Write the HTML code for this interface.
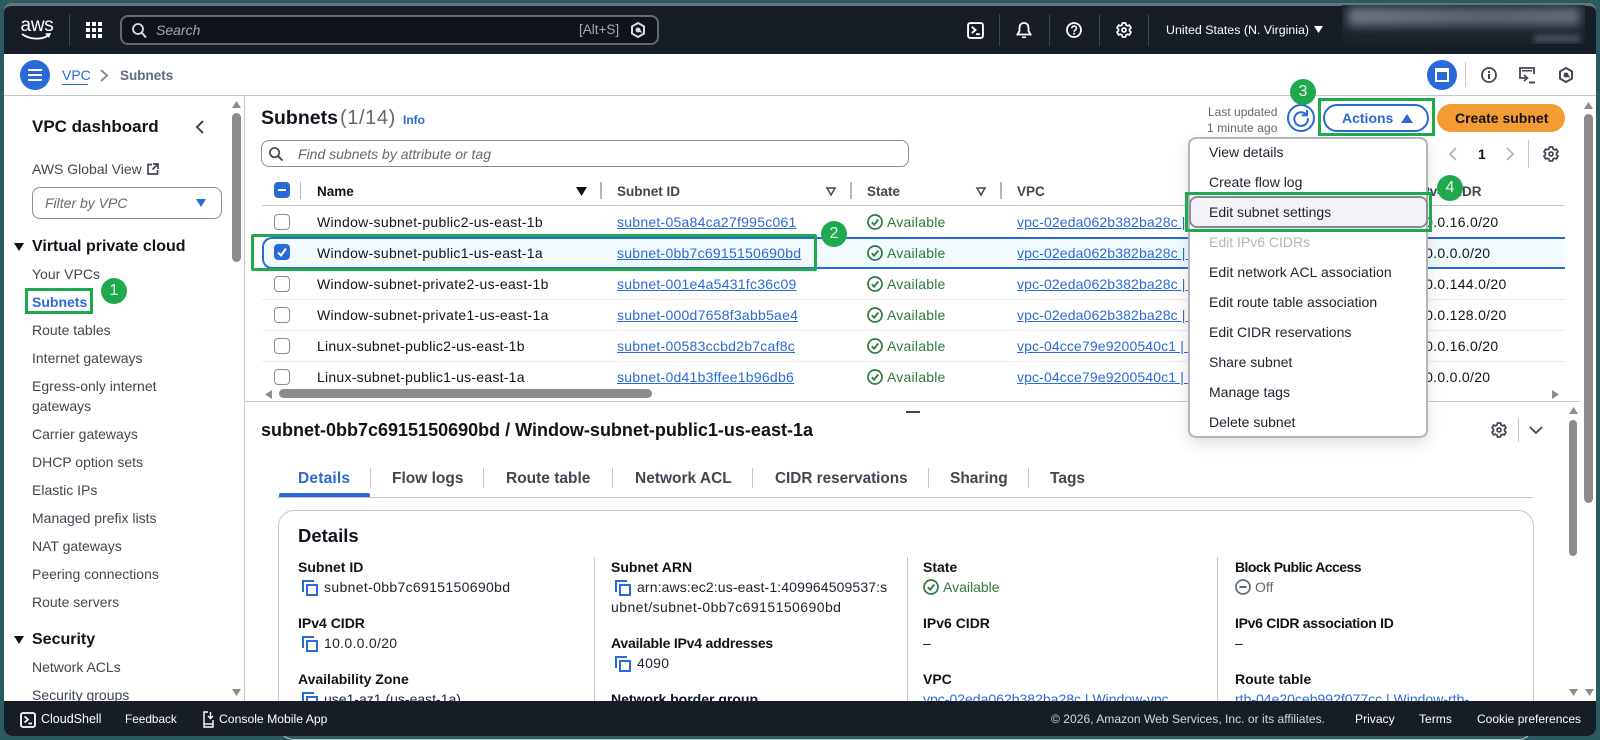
<!DOCTYPE html>
<html><head><meta charset="utf-8"><title>Subnets</title>
<style>
*{box-sizing:border-box}
html,body{margin:0;padding:0;width:1600px;height:740px;overflow:hidden;background:#2b5a60;font-family:"Liberation Sans",sans-serif;color:#0f141a}
#win{position:absolute;left:4px;top:3px;width:1592px;height:733px;background:#fff;border-radius:8px;overflow:hidden}
.a{position:absolute}
.t{position:absolute;white-space:nowrap;line-height:20px;font-size:14px}
.b{font-weight:700}
.l{color:#2a6ad8;text-decoration:underline}
.n{color:#424650;left:32px}
.g{color:#2b7a3c}
.h{font-weight:700;color:#424650}
.r{letter-spacing:.3px}
.i{letter-spacing:.25px}
.v{letter-spacing:.13px}
.c{letter-spacing:.3px}
.av{letter-spacing:.22px}
.sq{position:absolute;width:16px;height:16px;left:274px;border:1.5px solid #8c8c94;border-radius:4px;background:#fff}
.dv{position:absolute;width:1px;background:#c6c6cd}
.bar{position:absolute;width:2px;background:#b4b4bb}
.st{position:absolute;width:26px;height:26px;border-radius:50%;background:#1fa94f;color:#e8f5ec;font-size:16px;line-height:26px;text-align:center;z-index:30}
.gb{position:absolute;border:3px solid #1fa94f;z-index:29}
.ln{position:absolute;height:1px;background:#e9ebed}
.m{font-size:14px;color:#1b232d;left:1209px}
.f{color:#fff;font-size:12.100px}
svg{position:absolute;overflow:visible}
</style></head><body>
<svg width="0" height="0" style="position:absolute"><defs>
<symbol id="gear" viewBox="0 0 16 16"><path d="M6.400 1h3.200l.4 2 1.500.8 1.900-.7 1.600 2.800-1.500 1.300v1.600l1.500 1.300-1.600 2.800-1.900-.7-1.500.8-.4 2H6.400l-.4-2-1.500-.8-1.900.7L1 10.100l1.500-1.300V7.200L1 5.900l1.600-2.800 1.900.7 1.500-.8z" fill="none" stroke="currentColor" stroke-width="1.700" stroke-linejoin="round"/><circle cx="8" cy="8" r="2" fill="none" stroke="currentColor" stroke-width="1.700"/></symbol>
<symbol id="ok" viewBox="0 0 16 16"><circle cx="8" cy="8" r="7" fill="none" stroke="currentColor" stroke-width="1.700"/><path d="M4.800 8.200l2.300 2.500 4.200-5.200" fill="none" stroke="currentColor" stroke-width="1.800"/></symbol>
<symbol id="cp" viewBox="0 0 16 16"><path d="M1 12V1h11" fill="none" stroke="#2a6ad8" stroke-width="2"/><rect x="5" y="5" width="10" height="10" fill="none" stroke="#2a6ad8" stroke-width="2"/></symbol>
<symbol id="hx" viewBox="0 0 16 16"><path d="M8 1l6 3.400v7.200L8 15l-6-3.400V4.400z" fill="none" stroke="currentColor" stroke-width="2"/><path d="M5.500 8a2.500 2.500 0 0 1 5 0l2 3-3-1a2.500 2.500 0 0 1-4-2z" fill="currentColor"/></symbol>
<symbol id="term" viewBox="0 0 16 16"><rect x="1" y="1" width="14" height="14" rx="2" fill="none" stroke="currentColor" stroke-width="1.800"/><path d="M4.500 4.500L8 7.500l-3.500 3M8.500 11.500H12" fill="none" stroke="currentColor" stroke-width="1.800"/></symbol>
</defs></svg>

<div id="win"></div>

<!-- top nav -->
<div class="a" style="left:4px;top:3px;width:1592px;height:51px;background:#161d26;border-top:3px solid #69737d;border-radius:8px 8px 0 0"></div>
<div class="t" style="left:20px;top:15px;color:#fff;font-size:19px;line-height:22px;letter-spacing:-.3px;width:34px;text-align:center">aws</div>
<svg style="left:21px;top:33px" width="31" height="8" viewBox="0 0 31 8"><path d="M1 1c8 6 20 6 27 1" fill="none" stroke="#fff" stroke-width="1.800"/><path d="M24 .5l6-.5-2 5" fill="#fff"/></svg>
<div class="a" style="left:69px;top:14px;width:1px;height:32px;background:#424650"></div>
<svg style="left:86px;top:22px" width="16" height="16" viewBox="0 0 16 16" fill="#fff"><rect width="4" height="4"/><rect x="6" width="4" height="4"/><rect x="12" width="4" height="4"/><rect y="6" width="4" height="4"/><rect x="6" y="6" width="4" height="4"/><rect x="12" y="6" width="4" height="4"/><rect y="12" width="4" height="4"/><rect x="6" y="12" width="4" height="4"/><rect x="12" y="12" width="4" height="4"/></svg>
<div class="a" style="left:120px;top:15px;width:539px;height:30px;background:#0f141a;border:2px solid #656871;border-radius:8px"></div>
<svg style="left:132px;top:23px" width="15" height="15" viewBox="0 0 15 15"><circle cx="6" cy="6" r="5" fill="none" stroke="#d8dce0" stroke-width="1.800"/><path d="M10 10l4 4.500" stroke="#d8dce0" stroke-width="2"/></svg>
<div class="t" style="left:156px;top:20px;color:#a4abb4;font-style:italic">Search</div>
<div class="t" style="left:579px;top:20px;color:#a4abb4;font-size:13.500px">[Alt+S]</div>
<svg style="left:630px;top:22px;color:#d8dce0" width="16" height="16"><use href="#hx"/></svg>
<svg style="left:967px;top:22px;color:#fff" width="17" height="17"><use href="#term"/></svg>
<div class="a" style="left:999px;top:14px;width:1px;height:32px;background:#424650"></div>
<svg style="left:1016px;top:22px" width="16" height="17" viewBox="0 0 16 17"><path d="M8 1c-3 0-4.500 2-4.500 5v3L1.500 12.500h13L12.500 9V6C12.500 3 11 1 8 1z" fill="none" stroke="#fff" stroke-width="1.800"/><path d="M6 14.500h4v1.500H6z" fill="#fff"/></svg>
<div class="a" style="left:1049px;top:14px;width:1px;height:32px;background:#424650"></div>
<svg style="left:1066px;top:22px" width="16" height="16" viewBox="0 0 16 16"><circle cx="8" cy="8" r="7" fill="none" stroke="#fff" stroke-width="1.800"/><path d="M5.800 6.300c0-3 4.600-3 4.600 0 0 1.800-2.300 1.700-2.300 3.400" fill="none" stroke="#fff" stroke-width="1.600"/><rect x="7.200" y="10.800" width="1.800" height="1.800" fill="#fff"/></svg>
<div class="a" style="left:1099px;top:14px;width:1px;height:32px;background:#424650"></div>
<svg style="left:1116px;top:22px;color:#fff" width="16" height="16"><use href="#gear"/></svg>
<div class="a" style="left:1148px;top:14px;width:1px;height:32px;background:#424650"></div>
<div class="t" style="left:1166px;top:20px;color:#fff;font-size:12.400px">United States (N. Virginia)</div>
<svg style="left:1314px;top:26px" width="9" height="7"><path d="M0 0h9L4.500 7z" fill="#fff"/></svg>
<div class="a" style="left:1342px;top:5px;width:243px;height:39px;overflow:hidden;background:#1b222c"><div class="a" style="left:6px;top:2px;width:232px;height:19px;background:linear-gradient(90deg,#6c7886,#5a6572 60%,#626e7b);filter:blur(5px)"></div><div class="a" style="left:192px;top:30px;width:46px;height:7px;background:#4a525d;filter:blur(3px)"></div></div>

<!-- breadcrumb -->
<div class="a" style="left:4px;top:94.500px;width:1592px;height:1px;background:#c6c6cd"></div>
<div class="a" style="left:20px;top:60px;width:30px;height:30px;border-radius:50%;background:#2a6ad8"></div>
<svg style="left:28px;top:69px" width="14" height="12" fill="#fff"><rect width="14" height="2"/><rect y="5" width="14" height="2"/><rect y="10" width="14" height="2"/></svg>
<div class="t" style="left:62px;top:65px;color:#2a6ad8">VPC</div>
<div class="a" style="left:62px;top:84px;width:26px;height:1px;background:#2a6ad8"></div>
<svg style="left:100px;top:69px" width="9" height="13"><path d="M1 1l6 5.500L1 12" fill="none" stroke="#8c8c94" stroke-width="2"/></svg>
<div class="t b" style="left:120px;top:66px;color:#5f6b7a;font-size:13.500px">Subnets</div>
<div class="a" style="left:1427px;top:60px;width:30px;height:30px;border-radius:50%;background:#2a6ad8"></div>
<div class="a" style="left:1435px;top:68px;width:14px;height:14px;border:2px solid #fff;border-top-width:4px"></div>
<div class="a" style="left:1465px;top:62px;width:1px;height:25px;background:#c6c6cd"></div>
<svg style="left:1481px;top:67px" width="16" height="16" viewBox="0 0 16 16"><circle cx="8" cy="8" r="7" fill="none" stroke="#424650" stroke-width="1.800"/><rect x="7" y="7" width="2" height="5" fill="#424650"/><rect x="7" y="4" width="2" height="2" fill="#424650"/></svg>
<svg style="left:1519px;top:67px" width="16" height="17" viewBox="0 0 16 17"><path d="M7 11H1V1h14v6" fill="none" stroke="#424650" stroke-width="1.800"/><rect x="3" y="3" width="10" height="1.500" fill="#424650"/><path d="M5 8l3.500 3L5 14" fill="none" stroke="#424650" stroke-width="1.700"/><rect x="10" y="14.500" width="6" height="2" fill="#424650"/></svg>
<svg style="left:1558px;top:67px;color:#424650" width="16" height="16"><use href="#hx"/></svg>

<!-- sidebar -->
<div class="a" style="left:244px;top:95px;width:1px;height:606px;background:#c6c6cd"></div>
<div class="a" style="left:232px;top:113px;width:9px;height:149px;border-radius:5px;background:#8c8c8c"></div>
<svg style="left:232px;top:101px" width="9" height="7"><path d="M4.500 0L9 7H0z" fill="#8c8c8c"/></svg>
<svg style="left:232px;top:689px" width="9" height="7"><path d="M0 0h9L4.500 7z" fill="#8c8c8c"/></svg>
<div class="t b" style="left:32px;top:116px;font-size:17px;line-height:22px">VPC dashboard</div>
<svg style="left:195px;top:120px" width="9" height="14"><path d="M8 1L2 7l6 6" fill="none" stroke="#424650" stroke-width="2"/></svg>
<div class="t n" style="top:159px">AWS Global View</div>
<svg style="left:147px;top:163px" width="12" height="12" viewBox="0 0 12 12"><path d="M5 1.500H1v9.500h9.500V7M6 1h5v5M11 1L5.500 6.500" fill="none" stroke="#424650" stroke-width="1.700"/></svg>
<div class="a" style="left:32px;top:187px;width:190px;height:32px;border:1px solid #8c8c94;border-radius:8px"></div>
<div class="t" style="left:45px;top:193px;color:#656871;font-style:italic">Filter by VPC</div>
<svg style="left:196px;top:199px" width="10" height="8"><path d="M0 0h10L5 8z" fill="#2a6ad8"/></svg>
<svg style="left:14px;top:243px" width="10" height="8"><path d="M0 0h10L5 8z" fill="#0f141a"/></svg>
<div class="t b" style="left:32px;top:236.500px;font-size:16px">Virtual private cloud</div>
<div class="t n" style="top:264px">Your VPCs</div>
<div class="t b" style="left:32px;top:292px;color:#2a6ad8">Subnets</div>
<div class="t n" style="top:320px">Route tables</div>
<div class="t n" style="top:348px">Internet gateways</div>
<div class="t n" style="top:376px">Egress-only internet</div>
<div class="t n" style="top:396px">gateways</div>
<div class="t n" style="top:424px">Carrier gateways</div>
<div class="t n" style="top:452px">DHCP option sets</div>
<div class="t n" style="top:480px">Elastic IPs</div>
<div class="t n" style="top:508px">Managed prefix lists</div>
<div class="t n" style="top:536px">NAT gateways</div>
<div class="t n" style="top:564px">Peering connections</div>
<div class="t n" style="top:592px">Route servers</div>
<svg style="left:14px;top:636px" width="10" height="8"><path d="M0 0h10L5 8z" fill="#0f141a"/></svg>
<div class="t b" style="left:32px;top:629.500px;font-size:16px">Security</div>
<div class="t n" style="top:657px">Network ACLs</div>
<div class="t n" style="top:685px">Security groups</div>

<!-- main header -->
<div class="t b" style="left:261px;top:106px;font-size:19.500px;line-height:24px">Subnets</div>
<div class="t" style="left:340px;top:106px;font-size:20px;line-height:24px;color:#656871;letter-spacing:.6px">(1/14)</div>
<div class="t b" style="left:403px;top:110px;font-size:12px;color:#2a6ad8">Info</div>
<div class="t" style="left:1208px;top:102px;font-size:12px;color:#656871">Last updated</div>
<div class="t" style="left:1207px;top:118px;font-size:12px;color:#656871;letter-spacing:.1px">1 minute ago</div>
<div class="a" style="left:1287px;top:104px;width:28px;height:28px;border-radius:50%;border:2px solid #2a6ad8"></div>
<svg style="left:1293px;top:110px" width="16" height="16" viewBox="0 0 16 16"><path d="M12.800 4.200A6.800 6.800 0 1 0 14.800 8" fill="none" stroke="#2a6ad8" stroke-width="2"/><path d="M14 0v5.200H8.800" fill="none" stroke="#2a6ad8" stroke-width="2"/></svg>
<div class="a" style="left:1323px;top:104px;width:106px;height:28px;border-radius:14px;border:2px solid #2a6ad8;background:#fff"></div>
<div class="t b" style="left:1342px;top:108px;color:#2a6ad8">Actions</div>
<svg style="left:1401px;top:114px" width="12" height="9"><path d="M6 0l6 9H0z" fill="#2a6ad8"/></svg>
<div class="a" style="left:1437px;top:104px;width:128px;height:28px;border-radius:14px;background:#f39c33"></div>
<div class="t b" style="left:1455px;top:108px">Create subnet</div>
<div class="a" style="left:261px;top:140px;width:648px;height:27px;border:1px solid #8c8c94;border-radius:8px;background:#fff"></div>
<svg style="left:269px;top:147px" width="14" height="14" viewBox="0 0 15 15"><circle cx="6" cy="6" r="5" fill="none" stroke="#424650" stroke-width="1.800"/><path d="M10 10l4.500 4.500" stroke="#424650" stroke-width="2"/></svg>
<div class="t" style="left:298px;top:144px;color:#656871;font-style:italic">Find subnets by attribute or tag</div>
<svg style="left:1449px;top:147px" width="8" height="14"><path d="M7 1L1 7l6 6" fill="none" stroke="#b4b4bb" stroke-width="1.800"/></svg>
<div class="t b" style="left:1478px;top:144px">1</div>
<svg style="left:1506px;top:147px" width="8" height="14"><path d="M1 1l6 6-6 6" fill="none" stroke="#b4b4bb" stroke-width="1.800"/></svg>
<div class="a" style="left:1528px;top:140px;width:1px;height:28px;background:#c6c6cd"></div>
<svg style="left:1543px;top:146px;color:#424650" width="16" height="16"><use href="#gear"/></svg>

<!-- table header -->
<div class="a" style="left:274px;top:182px;width:16px;height:16px;background:#2a6ad8;border-radius:4px"></div>
<div class="a" style="left:278px;top:189px;width:8px;height:2px;background:#fff"></div>
<div class="bar" style="left:300px;top:182px;height:17px;width:1px"></div>
<div class="t b" style="left:317px;top:181.500px;color:#0f141a;font-size:13.500px">Name</div>
<svg style="left:576px;top:187px" width="11" height="9"><path d="M0 0h11L5.500 9z" fill="#0f141a"/></svg>
<div class="bar" style="left:600px;top:182px;height:17px"></div>
<div class="t h" style="left:617px;top:181.500px;font-size:13.500px">Subnet ID</div>
<svg style="left:826px;top:187px" width="10" height="9"><path d="M1 1h8L5 8z" fill="none" stroke="#424650" stroke-width="1.500"/></svg>
<div class="bar" style="left:850px;top:182px;height:17px"></div>
<div class="t h" style="left:867px;top:181.500px;font-size:13.500px">State</div>
<svg style="left:976px;top:187px" width="10" height="9"><path d="M1 1h8L5 8z" fill="none" stroke="#424650" stroke-width="1.500"/></svg>
<div class="bar" style="left:1000px;top:182px;height:17px"></div>
<div class="t h" style="left:1017px;top:181.500px;font-size:13.500px">VPC</div>
<div class="t h" style="left:1417px;top:181.500px;font-size:13.500px">IPv4 CIDR</div>
<div class="a" style="left:262px;top:205px;width:1303px;height:1px;background:#c6c6cd"></div>

<!-- rows -->
<div class="a" style="left:262px;top:236.500px;width:1303px;height:32px;background:#f1fbff;border:2px solid #2a6ad8;border-right:0;border-radius:10px 0 0 10px"></div>
<div class="ln" style="left:262px;top:299px;width:1303px"></div>
<div class="ln" style="left:262px;top:330px;width:1303px"></div>
<div class="ln" style="left:262px;top:361px;width:1303px"></div>

<div class="sq" style="top:214px"></div>
<div class="a" style="left:274px;top:244px;width:16px;height:16px;background:#2a6ad8;border-radius:4px"></div>
<svg style="left:277px;top:247px" width="10" height="10" viewBox="0 0 10 10"><path d="M1 5.500l3 3L9 1.500" fill="none" stroke="#fff" stroke-width="2"/></svg>
<div class="sq" style="top:276px"></div>
<div class="sq" style="top:307px"></div>
<div class="sq" style="top:338px"></div>
<div class="sq" style="top:369px"></div>

<div class="t r" style="left:317px;top:212px">Window-subnet-public2-us-east-1b</div>
<div class="t r" style="left:317px;top:243px">Window-subnet-public1-us-east-1a</div>
<div class="t r" style="left:317px;top:274px">Window-subnet-private2-us-east-1b</div>
<div class="t r" style="left:317px;top:305px">Window-subnet-private1-us-east-1a</div>
<div class="t i" style="left:317px;top:336px">Linux-subnet-public2-us-east-1b</div>
<div class="t i" style="left:317px;top:367px">Linux-subnet-public1-us-east-1a</div>

<div class="t l i" style="left:617px;top:212px">subnet-05a84ca27f995c061</div>
<div class="t l i" style="left:617px;top:243px">subnet-0bb7c6915150690bd</div>
<div class="t l i" style="left:617px;top:274px">subnet-001e4a5431fc36c09</div>
<div class="t l i" style="left:617px;top:305px">subnet-000d7658f3abb5ae4</div>
<div class="t l i" style="left:617px;top:336px">subnet-00583ccbd2b7caf8c</div>
<div class="t l i" style="left:617px;top:367px">subnet-0d41b3ffee1b96db6</div>

<svg class="g" style="left:867px;top:214px" width="16" height="16"><use href="#ok"/></svg><div class="t g av" style="left:887px;top:212px">Available</div>
<svg class="g" style="left:867px;top:245px" width="16" height="16"><use href="#ok"/></svg><div class="t g av" style="left:887px;top:243px">Available</div>
<svg class="g" style="left:867px;top:276px" width="16" height="16"><use href="#ok"/></svg><div class="t g av" style="left:887px;top:274px">Available</div>
<svg class="g" style="left:867px;top:307px" width="16" height="16"><use href="#ok"/></svg><div class="t g av" style="left:887px;top:305px">Available</div>
<svg class="g" style="left:867px;top:338px" width="16" height="16"><use href="#ok"/></svg><div class="t g av" style="left:887px;top:336px">Available</div>
<svg class="g" style="left:867px;top:369px" width="16" height="16"><use href="#ok"/></svg><div class="t g av" style="left:887px;top:367px">Available</div>

<div class="t l v" style="left:1017px;top:212px">vpc-02eda062b382ba28c | Window</div>
<div class="t l v" style="left:1017px;top:243px">vpc-02eda062b382ba28c | Window</div>
<div class="t l v" style="left:1017px;top:274px">vpc-02eda062b382ba28c | Window</div>
<div class="t l v" style="left:1017px;top:305px">vpc-02eda062b382ba28c | Window</div>
<div class="t l v" style="left:1017px;top:336px">vpc-04cce79e9200540c1 | Linux</div>
<div class="t l v" style="left:1017px;top:367px">vpc-04cce79e9200540c1 | Linux</div>

<div class="t c" style="left:1417px;top:212px">10.0.16.0/20</div>
<div class="t c" style="left:1417px;top:243px">10.0.0.0/20</div>
<div class="t c" style="left:1417px;top:274px">10.0.144.0/20</div>
<div class="t c" style="left:1417px;top:305px">10.0.128.0/20</div>
<div class="t c" style="left:1417px;top:336px">10.0.16.0/20</div>
<div class="t c" style="left:1417px;top:367px">10.0.0.0/20</div>

<!-- h scrollbar -->
<svg style="left:265px;top:390px" width="7" height="9"><path d="M7 0v9L0 4.500z" fill="#8c8c8c"/></svg>
<div class="a" style="left:279px;top:389px;width:373px;height:9px;border-radius:5px;background:#8c8c8c"></div>
<svg style="left:1552px;top:390px" width="7" height="9"><path d="M0 0v9l7-4.500z" fill="#8c8c8c"/></svg>
<div class="a" style="left:245px;top:401px;width:1335px;height:1px;background:#c6c6cd"></div>
<div class="a" style="left:906px;top:411px;width:14px;height:2px;background:#424650"></div>

<!-- right scrollbars -->
<svg style="left:1584px;top:102px" width="9" height="7"><path d="M4.500 0L9 7H0z" fill="#8c8c8c"/></svg>
<div class="a" style="left:1584px;top:114px;width:9px;height:389px;border-radius:5px;background:#8c8c8c"></div>
<svg style="left:1585px;top:689px" width="9" height="7"><path d="M0 0h9L4.500 7z" fill="#8c8c8c"/></svg>
<svg style="left:1569px;top:407px" width="9" height="7"><path d="M4.500 0L9 7H0z" fill="#8c8c8c"/></svg>
<div class="a" style="left:1569px;top:420px;width:8px;height:136px;border-radius:5px;background:#8c8c8c"></div>
<svg style="left:1569px;top:689px" width="9" height="7"><path d="M0 0h9L4.500 7z" fill="#8c8c8c"/></svg>

<!-- details pane -->
<div class="t b" style="left:261px;top:419px;font-size:18px;line-height:22px">subnet-0bb7c6915150690bd / Window-subnet-public1-us-east-1a</div>
<svg style="left:1491px;top:422px;color:#424650" width="16" height="16"><use href="#gear"/></svg>
<div class="a" style="left:1518px;top:418px;width:1px;height:24px;background:#c6c6cd"></div>
<svg style="left:1529px;top:426px" width="14" height="8"><path d="M1 1l6 6 6-6" fill="none" stroke="#424650" stroke-width="1.800"/></svg>

<div class="t b" style="left:298px;top:469px;font-size:15.500px;color:#2a6ad8;letter-spacing:.2px">Details</div>
<div class="t b" style="left:392px;top:469px;font-size:15.500px;color:#424650">Flow logs</div>
<div class="t b" style="left:506px;top:469px;font-size:15.500px;color:#424650">Route table</div>
<div class="t b" style="left:635px;top:469px;font-size:15.500px;color:#424650">Network ACL</div>
<div class="t b" style="left:775px;top:469px;font-size:15.300px;color:#424650">CIDR reservations</div>
<div class="t b" style="left:950px;top:469px;font-size:15.500px;color:#424650">Sharing</div>
<div class="t b" style="left:1050px;top:469px;font-size:15.500px;color:#424650">Tags</div>
<div class="dv" style="left:370px;top:468px;height:20px"></div>
<div class="dv" style="left:483px;top:468px;height:20px"></div>
<div class="dv" style="left:612px;top:468px;height:20px"></div>
<div class="dv" style="left:752px;top:468px;height:20px"></div>
<div class="dv" style="left:928px;top:468px;height:20px"></div>
<div class="dv" style="left:1028px;top:468px;height:20px"></div>
<div class="a" style="left:277px;top:497px;width:1256px;height:1px;background:#c6c6cd"></div>
<div class="a" style="left:279px;top:493px;width:91px;height:4px;background:#2a6ad8;border-radius:2px 2px 0 0"></div>

<div class="a" style="left:278px;top:510px;width:1256px;height:230px;border:1px solid #c6c6cd;border-radius:16px"></div>
<div class="t b" style="left:298px;top:525px;font-size:18.500px;line-height:22px">Details</div>
<div class="dv" style="left:594px;top:557px;height:150px"></div>
<div class="dv" style="left:907px;top:557px;height:150px"></div>
<div class="dv" style="left:1217px;top:557px;height:150px"></div>

<div class="t b" style="left:298px;top:557px">Subnet ID</div>
<svg style="left:302px;top:580px" width="16" height="16"><use href="#cp"/></svg>
<div class="t" style="left:324px;top:577px;color:#1b232d;letter-spacing:.34px">subnet-0bb7c6915150690bd</div>
<div class="t b" style="left:298px;top:613px">IPv4 CIDR</div>
<svg style="left:302px;top:636px" width="16" height="16"><use href="#cp"/></svg>
<div class="t" style="left:324px;top:633px;color:#1b232d;letter-spacing:.3px">10.0.0.0/20</div>
<div class="t b" style="left:298px;top:669px">Availability Zone</div>
<svg style="left:302px;top:692px" width="16" height="16"><use href="#cp"/></svg>
<div class="t" style="left:324px;top:689px;color:#1b232d">use1-az1 (us-east-1a)</div>

<div class="t b" style="left:611px;top:557px">Subnet ARN</div>
<svg style="left:615px;top:580px" width="16" height="16"><use href="#cp"/></svg>
<div class="t" style="left:637px;top:577px;color:#1b232d;letter-spacing:.12px">arn:aws:ec2:us-east-1:409964509537:s</div>
<div class="t" style="left:611px;top:597px;color:#1b232d;letter-spacing:.44px">ubnet/subnet-0bb7c6915150690bd</div>
<div class="t b" style="left:611px;top:633px;letter-spacing:-.2px">Available IPv4 addresses</div>
<svg style="left:615px;top:656px" width="16" height="16"><use href="#cp"/></svg>
<div class="t" style="left:637px;top:653px;color:#1b232d;letter-spacing:.3px">4090</div>
<div class="t b" style="left:611px;top:689px">Network border group</div>

<div class="t b" style="left:923px;top:557px">State</div>
<svg class="g" style="left:923px;top:579px" width="16" height="16"><use href="#ok"/></svg>
<div class="t g" style="left:943px;top:577px">Available</div>
<div class="t b" style="left:923px;top:613px">IPv6 CIDR</div>
<div class="t" style="left:923px;top:633px">–</div>
<div class="t b" style="left:923px;top:669px">VPC</div>
<div class="t l" style="left:923px;top:689px">vpc-02eda062b382ba28c | Window-vpc</div>

<div class="t b" style="left:1235px;top:557px;letter-spacing:-.55px">Block Public Access</div>
<svg style="left:1235px;top:579px" width="16" height="16" viewBox="0 0 16 16"><circle cx="8" cy="8" r="7" fill="none" stroke="#5f6b7a" stroke-width="1.700"/><rect x="4.500" y="7" width="7" height="2" fill="#5f6b7a"/></svg>
<div class="t" style="left:1255px;top:577px;color:#656871">Off</div>
<div class="t b" style="left:1235px;top:613px;letter-spacing:-.3px">IPv6 CIDR association ID</div>
<div class="t" style="left:1235px;top:633px">–</div>
<div class="t b" style="left:1235px;top:669px">Route table</div>
<div class="t l" style="left:1235px;top:689px">rtb-04e20ceb992f077cc | Window-rtb-</div>

<!-- dropdown -->
<div class="a" style="left:1188px;top:137px;width:240px;height:301px;background:#fff;border:2px solid #b4b4bb;border-radius:8px;box-shadow:0 6px 16px rgba(0,7,22,.12);z-index:10"></div>
<div class="a" style="left:1189px;top:196px;width:239px;height:32px;background:#f3f3f7;border:2px solid #8c8c94;border-radius:8px;z-index:11"></div>
<div style="position:absolute;left:0;top:0;z-index:12">
<div class="t m" style="top:142px">View details</div>
<div class="t m" style="top:172px">Create flow log</div>
<div class="t m" style="top:202px">Edit subnet settings</div>
<div class="t m" style="top:232px;color:#b4b4bb">Edit IPv6 CIDRs</div>
<div class="t m" style="top:262px;letter-spacing:.07px">Edit network ACL association</div>
<div class="t m" style="top:292px">Edit route table association</div>
<div class="t m" style="top:322px">Edit CIDR reservations</div>
<div class="t m" style="top:352px">Share subnet</div>
<div class="t m" style="top:382px">Manage tags</div>
<div class="t m" style="top:412px">Delete subnet</div>
</div>

<!-- annotations -->
<div class="gb" style="left:25px;top:288px;width:68px;height:26px"></div>
<div class="st" style="left:101px;top:278px">1</div>
<div class="gb" style="left:251px;top:234px;width:566px;height:37px;border-radius:2px"></div>
<div class="st" style="left:821px;top:221px">2</div>
<div class="gb" style="left:1318px;top:98px;width:117px;height:38px"></div>
<div class="st" style="left:1290px;top:79px">3</div>
<div class="gb" style="left:1185px;top:192px;width:247px;height:40px"></div>
<div class="st" style="left:1437px;top:175px">4</div>

<!-- footer -->
<div class="a" style="left:4px;top:701px;width:1592px;height:35px;background:#161d26;border-radius:0 0 8px 8px;z-index:40"></div>
<div style="position:absolute;left:0;top:0;z-index:41">
<svg style="left:20px;top:712px;color:#fff" width="16" height="16"><use href="#term"/></svg>
<div class="t f" style="left:41px;top:709px;font-size:12.500px">CloudShell</div>
<div class="t f" style="left:125px;top:709px;font-size:11.800px">Feedback</div>
<svg style="left:203px;top:711px" width="12" height="17" viewBox="0 0 12 17"><path d="M5 1H1v15h9V9M7.500 1v6M5 5l2.500 2.500L10 5" fill="none" stroke="#fff" stroke-width="1.400"/><path d="M1 13h9" stroke="#fff" stroke-width="1.400"/></svg>
<div class="t f" style="left:219px;top:709px;font-size:12.200px">Console Mobile App</div>
<div class="t f" style="left:1051px;top:709px;color:#d5dbdb">© 2026, Amazon Web Services, Inc. or its affiliates.</div>
<div class="t f" style="left:1355px;top:709px">Privacy</div>
<div class="t f" style="left:1419px;top:709px">Terms</div>
<div class="t f" style="left:1477px;top:709px;font-size:12px">Cookie preferences</div>
</div>
</body></html>
